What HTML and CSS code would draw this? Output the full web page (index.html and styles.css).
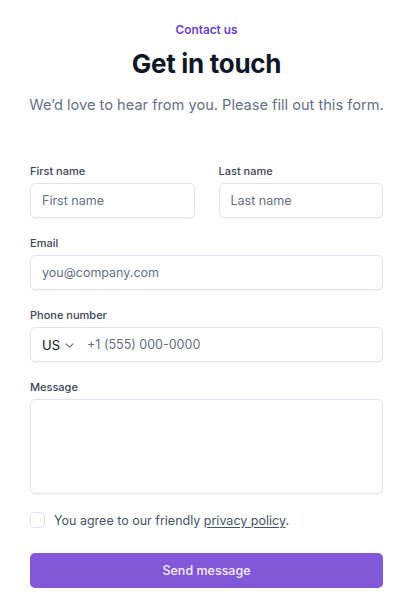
FILE: index.html
```html
<!DOCTYPE html>
<html lang="en">
<head>
<meta charset="utf-8">
<link rel="stylesheet" href="styles.css">
</head>
<body>
<main class="page">
  <header class="head">
    <p class="eyebrow">Contact us</p>
    <h1 class="title">Get in touch</h1>
    <p class="sub">We’d love to hear from you. Please fill out this form.</p>
  </header>
  <form class="form">
    <div class="row">
      <label class="field">
        <span class="label">First name</span>
        <span class="input"><span class="ph">First name</span></span>
      </label>
      <label class="field">
        <span class="label">Last name</span>
        <span class="input"><span class="ph">Last name</span></span>
      </label>
    </div>
    <label class="field">
      <span class="label">Email</span>
      <span class="input"><span class="ph">you@company.com</span></span>
    </label>
    <label class="field">
      <span class="label">Phone number</span>
      <span class="input phone">
        <span class="cc">US</span>
        <svg class="chev" width="9" height="5" viewBox="0 0 9 5" fill="none"><path d="M1 0.8l3.5 3.4 3.5-3.4" stroke="#667085" stroke-width="1.1" stroke-linecap="round" stroke-linejoin="round"/></svg>
        <span class="ph">+1 (555) 000-0000</span>
      </span>
    </label>
    <label class="field">
      <span class="label">Message</span>
      <span class="input area"></span>
    </label>
    <div class="agree">
      <span class="box"></span>
      <span class="agree-text">You agree to our friendly <u>privacy policy</u>.</span>
    </div>
    <div class="btn">Send message</div>
  </form>
</main>
</body>
</html>
```
FILE: styles.css
```css
* { box-sizing: border-box; }
html, body { margin: 0; padding: 0; background: #fff; }
body { font-family: Inter, "Noto Sans", sans-serif; color: #101828; }
.page { padding: 22px 23px 0 30px; width: 406px; }
.head { display: flex; flex-direction: column; align-items: center; width: 353px; }
.eyebrow { margin: 0; font-size: 11.8px; line-height: 16px; font-weight: 600; color: #6941C6; }
.title { margin: 10px 0 0; font-size: 26px; line-height: 32px; font-weight: 700; color: #101828; letter-spacing: -0.3px; }
.sub { margin: 15px -10px 0; font-size: 14.6px; line-height: 20px; color: #667085; white-space: nowrap; }
.form { margin-top: 49px; display: flex; flex-direction: column; gap: 18px; width: 353px; }
.row { display: grid; grid-template-columns: 1fr 1fr; gap: 24px; }
.field { display: flex; flex-direction: column; gap: 5px; }
.label { font-size: 11px; line-height: 14px; font-weight: 500; color: #3d4656; }
.input { height: 35px; border: 1px solid #e1e4ea; border-radius: 5px; display: flex; align-items: center; padding: 0 11px; font-size: 12.5px; box-shadow: 0 1px 2px rgba(16,24,40,0.04); }
.ph { color: #667085; }
.phone .cc { color: #101828; font-size: 13px; }
.chev { margin: 1px 13px 0 5px; }
.area { height: 95px; }
.agree { display: flex; align-items: center; gap: 9px; margin-top: 0; }
.box { width: 15px; height: 16px; border: 1px solid #e1e4ea; border-radius: 4px; }
.agree-text { font-size: 12.5px; color: #475467; }
.agree-text u { text-decoration-color: #475467; text-underline-offset: 2px; }
.btn { margin-top: 7px; height: 35px; background: #8257d8; border-radius: 5px; display: flex; align-items: center; justify-content: center; color: #f4effd; font-size: 12.5px; font-weight: 500; }
```
